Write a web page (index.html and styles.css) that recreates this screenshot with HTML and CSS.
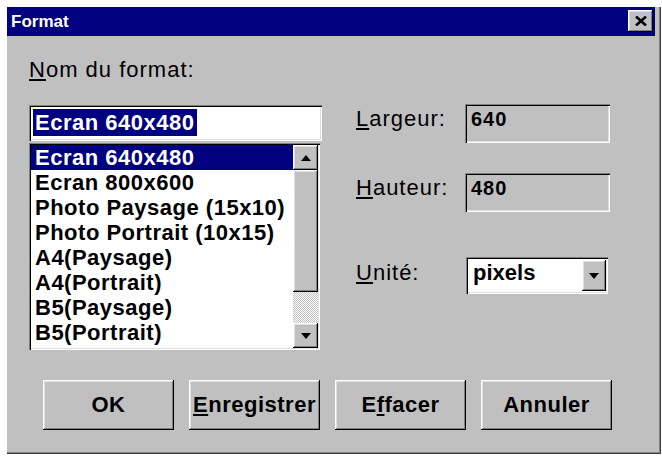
FILE: index.html
```html
<!DOCTYPE html>
<html lang="fr">
<head>
<meta charset="utf-8">
<title>Format</title>
<link rel="stylesheet" href="styles.css">
</head>
<body>
<div class="dialog">
  <div class="titlebar">
    <span class="title">Format</span>
    <button class="close" aria-label="Fermer">
      <svg width="12" height="10" viewBox="0 0 12 10"><path d="M1 0.5 L11 9.5 M11 0.5 L1 9.5" stroke="#000" stroke-width="2.6" fill="none"/></svg>
    </button>
  </div>
  <div class="main">
    <div class="left">
      <div class="label"><u>N</u>om du format:</div>
      <div class="edit"><span class="sel">Ecran 640x480</span></div>
      <div class="listbox">
        <ul class="items">
          <li class="selected">Ecran 640x480</li>
          <li>Ecran 800x600</li>
          <li>Photo Paysage (15x10)</li>
          <li>Photo Portrait (10x15)</li>
          <li>A4(Paysage)</li>
          <li>A4(Portrait)</li>
          <li>B5(Paysage)</li>
          <li>B5(Portrait)</li>
        </ul>
        <div class="scrollbar">
          <div class="sb-btn"><svg width="10" height="6" viewBox="0 0 10 6"><path d="M0 6 L5 0 L10 6 Z" fill="#000"/></svg></div>
          <div class="thumb"></div>
          <div class="track"></div>
          <div class="sb-btn"><svg width="10" height="6" viewBox="0 0 10 6"><path d="M0 0 L10 0 L5 6 Z" fill="#000"/></svg></div>
        </div>
      </div>
    </div>
    <div class="right">
      <div class="row">
        <span class="label rlabel"><u>L</u>argeur:</span>
        <div class="field">640</div>
      </div>
      <div class="row row-h">
        <span class="label rlabel"><u>H</u>auteur:</span>
        <div class="field">480</div>
      </div>
      <div class="row row-u">
        <span class="label rlabel"><u>U</u>nité:</span>
        <div class="combo">
          <span class="combo-text">pixels</span>
          <span class="combo-btn"><svg width="10" height="6" viewBox="0 0 10 6"><path d="M0 0 L10 0 L5 6 Z" fill="#000"/></svg></span>
        </div>
      </div>
    </div>
  </div>
  <div class="buttons">
    <button class="btn">OK</button>
    <button class="btn"><u>E</u>nregistrer</button>
    <button class="btn">E<u>f</u>facer</button>
    <button class="btn">Annuler</button>
  </div>
</div>
</body>
</html>
```

FILE: styles.css
```css
body {
  margin: 0;
  background: #ffffff;
  font-family: "Liberation Sans", Arial, sans-serif;
  color: #000;
}

.dialog {
  margin: 7px 0 0 7px;
  width: 654px;
  height: 447px;
  box-sizing: border-box;
  padding-right: 6px;
  background: #c0c0c0;
  box-shadow: inset -1px -1px #404040, inset -2px -2px #808080;
  display: flex;
  flex-direction: column;
}

.titlebar {
  height: 29px;
  flex: none;
  background: #000080;
  display: flex;
  justify-content: space-between;
  align-items: flex-start;
  padding-left: 4px;
}

.title {
  color: #fff;
  font-weight: bold;
  font-size: 17px;
  line-height: 29px;
}

.close {
  width: 25px;
  height: 22px;
  margin: 3px 2px 0 0;
  padding: 0;
  border: 0;
  background: #c0c0c0;
  display: flex;
  align-items: center;
  justify-content: center;
  box-shadow: inset -1px -1px #000, inset 1px 1px #fff, inset -2px -2px #808080, inset 2px 2px #dfdfdf;
}

.main {
  display: flex;
  padding: 21px 0 0 22px;
}

.left {
  width: 293px;
  display: flex;
  flex-direction: column;
}

.label {
  font-size: 22px;
  line-height: 26px;
  letter-spacing: 1px;
}

.edit {
  margin-top: 22px;
  height: 36px;
  box-sizing: border-box;
  padding: 2px;
  background: #fff;
  box-shadow: inset 1px 1px #808080, inset 2px 2px #000, inset -1px -1px #fff, inset -2px -2px #dfdfdf;
}

.sel {
  display: inline-block;
  margin: 2px 0 0 2px;
  padding: 0 3px 0 2px;
  background: #000080;
  color: #fff;
  font-weight: bold;
  font-size: 22px;
  letter-spacing: 0.5px;
  line-height: 27px;
}

.listbox {
  margin-top: 2px;
  width: 291px;
  height: 207px;
  box-sizing: border-box;
  padding: 2px;
  background: #fff;
  display: flex;
  box-shadow: inset 1px 1px #808080, inset 2px 2px #000, inset -1px -1px #fff, inset -2px -2px #dfdfdf;
}

.items {
  list-style: none;
  margin: 0;
  padding: 0;
  flex: 1;
  overflow: hidden;
}

.items li {
  font-weight: bold;
  font-size: 22px;
  letter-spacing: 0.5px;
  line-height: 25px;
  padding-left: 4px;
  white-space: nowrap;
}

.items li.selected {
  background: #000080;
  color: #fff;
}

.scrollbar {
  width: 25px;
  flex: none;
  display: flex;
  flex-direction: column;
}

.sb-btn {
  height: 25px;
  flex: none;
  background: #c0c0c0;
  display: flex;
  align-items: center;
  justify-content: center;
  box-shadow: inset -1px -1px #000, inset 1px 1px #fff, inset -2px -2px #808080, inset 2px 2px #dfdfdf;
}

.thumb {
  height: 122px;
  flex: none;
  background: #c0c0c0;
  box-shadow: inset -1px -1px #000, inset 1px 1px #fff, inset -2px -2px #808080, inset 2px 2px #dfdfdf;
}

.track {
  flex: 1;
  background: repeating-conic-gradient(#c0c0c0 0 25%, #ffffff 0 50%) 0 0 / 2px 2px;
}

.right {
  margin-left: 34px;
  padding-top: 47px;
  display: flex;
  flex-direction: column;
}

.row {
  display: flex;
  align-items: baseline;
}

.row-h {
  margin-top: 30px;
}

.row-u {
  margin-top: 45px;
}

.rlabel {
  width: 109px;
}

.field {
  width: 145px;
  height: 39px;
  box-sizing: border-box;
  padding: 2px 6px 0;
  font-weight: bold;
  font-size: 20px;
  letter-spacing: 1px;
  line-height: 26px;
  box-shadow: inset 1px 1px #808080, inset 2px 2px #000, inset -1px -1px #fff, inset -2px -2px #dfdfdf;
}

.combo {
  width: 142px;
  height: 37px;
  margin-left: 1px;
  box-sizing: border-box;
  padding: 2px;
  background: #fff;
  display: flex;
  justify-content: space-between;
  align-items: center;
  box-shadow: inset 1px 1px #808080, inset 2px 2px #000, inset -1px -1px #fff, inset -2px -2px #dfdfdf;
}

.combo-text {
  align-self: flex-start;
  padding: 1px 0 0 5px;
  font-weight: bold;
  font-size: 22px;
  line-height: 26px;
}

.combo-btn {
  width: 24px;
  height: 31px;
  background: #c0c0c0;
  display: flex;
  align-items: center;
  justify-content: center;
  box-shadow: inset -1px -1px #000, inset 1px 1px #fff, inset -2px -2px #808080, inset 2px 2px #dfdfdf;
}

.buttons {
  display: flex;
  gap: 15px;
  padding-left: 36px;
  margin-top: 30px;
}

.btn {
  width: 131px;
  height: 50px;
  padding: 0;
  border: 0;
  background: #c0c0c0;
  font-family: "Liberation Sans", Arial, sans-serif;
  font-weight: bold;
  font-size: 22px;
  letter-spacing: 0.5px;
  color: #000;
  box-shadow: inset -1px -1px #000, inset 1px 1px #fff, inset -2px -2px #808080, inset 2px 2px #dfdfdf;
}
```
